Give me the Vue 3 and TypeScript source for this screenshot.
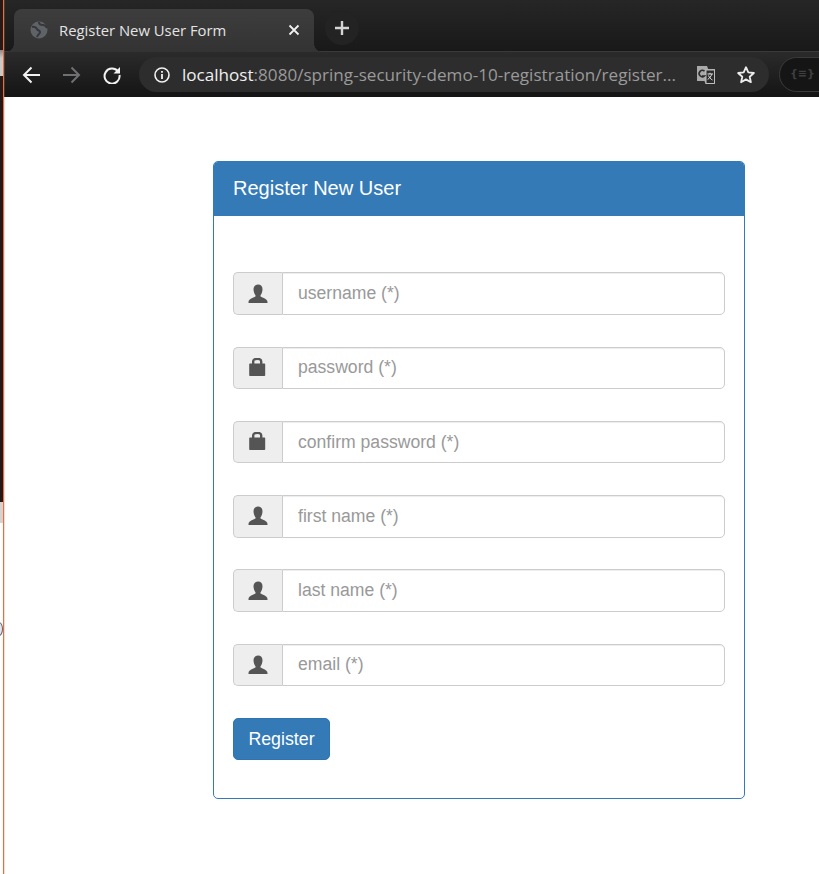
<template>
  <div class="screen">
    <div class="edge">
      <div class="edge-top"></div>
      <div class="edge-mark"></div>
    </div>
    <div class="window">
      <header class="browser">
        <div class="tabstrip">
          <div class="tab">
            <svg class="globe" viewBox="0 0 18 18">
              <circle cx="9" cy="9" r="8.5" fill="#5f6368" />
              <path d="M2 6c3-1 4 0 5 2s3 1 3 3-2 2-3 5M9 1c0 2 2 3 4 3s3 1 4 3" fill="none" stroke="#35373a" stroke-width="2" />
            </svg>
            <span class="tab-title">Register New User Form</span>
            <svg class="tab-close" viewBox="0 0 12 12">
              <path d="M1.5 1.5l9 9M10.5 1.5l-9 9" stroke="#f1f1f1" stroke-width="1.8" />
            </svg>
          </div>
          <div class="new-tab">
            <svg viewBox="0 0 16 16" width="16" height="16">
              <path d="M8 1v14M1 8h14" stroke="#d5d5d5" stroke-width="2.4" />
            </svg>
          </div>
        </div>
        <div class="toolbar">
          <svg class="nav" viewBox="0 0 18 18">
            <path d="M18 9H2M9.500 1.500L2 9l7.500 7.500" fill="none" stroke="#f2f2f2" stroke-width="2" />
          </svg>
          <svg class="nav" viewBox="0 0 18 18">
            <path d="M0 9h16M8.500 1.500L16 9l-7.500 7.500" fill="none" stroke="#6f7073" stroke-width="2" />
          </svg>
          <svg class="nav" viewBox="0 0 18 18">
            <path d="M15 5.500A7.500 7.500 0 1 0 16.500 9" fill="none" stroke="#f2f2f2" stroke-width="2" />
            <path d="M17 1v6.500h-6.500z" fill="#f2f2f2" />
          </svg>
          <div class="omnibox">
            <svg class="info" viewBox="0 0 16 16">
              <circle cx="8" cy="8" r="7" fill="none" stroke="#f1f1f1" stroke-width="1.600" />
              <path d="M8 7v5M8 4v1.800" stroke="#f1f1f1" stroke-width="1.800" />
            </svg>
            <div class="url"><span class="host">localhost</span>:8080/spring-security-demo-10-registration/register...</div>
            <svg class="translate" viewBox="0 0 20 20">
              <path d="M1 1h10l1.200 3H19v15H9.500l-1-3H1z" fill="#a9a9a9" />
              <path d="M10 5h8.500v13.500H10z" fill="#2c2c2c" stroke="#bdbdbd" stroke-width="1" />
              <path d="M8.500 6.200A3.200 3.200 0 1 0 8.500 11H5.800" fill="none" stroke="#2c2c2c" stroke-width="1.600" />
              <path d="M11.500 9h5.500M14 7.800v1.400M15.700 9.200c-.5 2-2 4-4 5.200M12.500 10.500c.8 2 2 3.500 4 4.500" fill="none" stroke="#dedede" stroke-width="1" />
            </svg>
            <svg class="star" viewBox="0 0 20 20">
              <path d="M10 2.200l2.300 5.200 5.600.6-4.200 3.700 1.200 5.500L10 14.400l-4.900 2.800 1.200-5.500L2.100 8l5.600-.6z" fill="none" stroke="#ececec" stroke-width="1.800" stroke-linejoin="round" />
            </svg>
          </div>
          <div class="profile">{≡}</div>
        </div>
      </header>

      <main class="page">
        <section class="panel">
          <h3 class="panel-head">Register New User</h3>
          <form class="panel-body" @submit.prevent>
            <div v-for="field in fields" :key="field.placeholder" class="field">
              <span class="addon">
                <svg v-if="field.icon === 'user'" viewBox="0 0 20 20" width="20" height="20">
                  <path d="M10 .5c2.900 0 4.500 2 4.500 4.800 0 2.400-1 4.900-2 5.900v1.400c1 1 6.800 1.800 7 5.500v.9H.5v-.9c.2-3.700 6-4.500 7-5.500v-1.400c-1-1-2-3.500-2-5.900C5.500 2.500 7.100.5 10 .5z" fill="#555" />
                </svg>
                <svg v-else viewBox="0 0 20 20" width="20" height="20">
                  <path d="M2.200 5.500h14c.6 0 1 .4 1 1V17c0 .6-.4 1-1 1h-14c-.6 0-1-.4-1-1V6.500c0-.6.4-1 1-1z" fill="#555" />
                  <path d="M5.200 6V3.200C5.200 1.600 6.800.9 9.200.9s4 .7 4 2.300V6" fill="none" stroke="#555" stroke-width="2.400" />
                </svg>
              </span>
              <input class="control" type="text" :placeholder="field.placeholder" />
            </div>
            <button class="submit" type="submit">Register</button>
          </form>
        </section>
      </main>
    </div>
  </div>
</template>

<script setup lang="ts">
interface Field {
  placeholder: string
  icon: 'user' | 'lock'
}

const fields: Field[] = [
  { placeholder: 'username (*)', icon: 'user' },
  { placeholder: 'password (*)', icon: 'lock' },
  { placeholder: 'confirm password (*)', icon: 'lock' },
  { placeholder: 'first name (*)', icon: 'user' },
  { placeholder: 'last name (*)', icon: 'user' },
  { placeholder: 'email (*)', icon: 'user' },
]
</script>

<style scoped>
.screen {
  display: flex;
  width: 819px;
  height: 874px;
  overflow: hidden;
  font-family: "Liberation Sans", Arial, sans-serif;
  background: #fff;
}

.edge {
  position: relative;
  width: 4px;
  flex: none;
  background: #fff;
  border-right: 1px solid #e8703a;
  box-shadow: 1px 0 0 rgba(232, 112, 58, 0.25);
  box-sizing: border-box;
}

.edge-top {
  height: 523px;
  background: linear-gradient(
    #241a18 0,
    #241a18 50px,
    #8a8a8a 50px,
    #c9c9c9 58px,
    #c9c9c9 76px,
    #241a18 76px,
    #241a18 502px,
    #d6d2d2 502px,
    #d6d2d2 523px
  );
}

.edge-mark {
  position: absolute;
  left: -5px;
  top: 622px;
  width: 8px;
  height: 14px;
  box-sizing: border-box;
  border: 1px solid #59607a;
  border-radius: 50%;
  background: #e4e6ee;
}

.window {
  flex: 1;
  min-width: 0;
}

.browser {
  height: 97px;
  background: #131313;
}

.tabstrip {
  display: flex;
  align-items: center;
  gap: 11px;
  height: 52px;
  box-sizing: border-box;
  padding-top: 9px;
  border-bottom: 1px solid #3a3a3a;
  background: linear-gradient(#262626, #191919);
}

.tab {
  position: relative;
  display: flex;
  align-items: center;
  width: 300px;
  height: 43px;
  margin: 0 0 -1px 10px;
  box-sizing: border-box;
  padding: 0 14px 2px 16px;
  border-radius: 8px 8px 0 0;
  background: linear-gradient(#3d3d3d, #333);
}

.tab::before,
.tab::after {
  content: "";
  position: absolute;
  bottom: 0;
  width: 8px;
  height: 8px;
}

.tab::before {
  left: -8px;
  background: radial-gradient(circle at 0 0, transparent 7.500px, #333 8px);
}

.tab::after {
  right: -8px;
  background: radial-gradient(circle at 100% 0, transparent 7.500px, #333 8px);
}

.globe {
  width: 18px;
  height: 18px;
  flex: none;
}

.tab-title {
  flex: 1;
  margin-left: 11px;
  color: #e4e4e4;
  font-family: "Open Sans", "Noto Sans", sans-serif;
  font-size: 14.850px;
  white-space: nowrap;
}

.tab-close {
  width: 12px;
  height: 12px;
  flex: none;
}

.new-tab {
  display: flex;
  align-items: center;
  justify-content: center;
  width: 34px;
  height: 34px;
  margin-bottom: 5px;
  border-radius: 50%;
  background: #232323;
}

.toolbar {
  display: flex;
  align-items: center;
  height: 45px;
  padding-left: 18px;
  overflow: hidden;
  background: linear-gradient(#2b2b2b, #141414);
}

.nav {
  width: 18px;
  height: 18px;
  flex: none;
  margin-right: 22.500px;
}

.omnibox {
  display: flex;
  align-items: center;
  width: 630px;
  height: 35px;
  flex: none;
  margin-left: -4.500px;
  box-sizing: border-box;
  padding: 0 13px 0 15px;
  border-radius: 18px;
  background: #2d2d2d;
}

.info {
  width: 16px;
  height: 16px;
  flex: none;
}

.url {
  flex: 1;
  min-width: 0;
  margin-left: 12px;
  color: #9a9a9a;
  font-family: "Open Sans", "Noto Sans", sans-serif;
  font-size: 17.100px;
  white-space: nowrap;
  overflow: hidden;
}

.host {
  color: #f0f0f0;
}

.translate {
  width: 20px;
  height: 20px;
  flex: none;
  margin-right: 20px;
}

.star {
  width: 20px;
  height: 20px;
  flex: none;
}

.profile {
  width: 60px;
  height: 35px;
  flex: none;
  margin-left: 10px;
  box-sizing: border-box;
  padding: 9px 0 0 10px;
  border: 1px solid #3a3a3a;
  border-radius: 18px;
  background: #151515;
  color: #3f3f3f;
  font-family: "DejaVu Sans", sans-serif;
  font-size: 11px;
  font-weight: 700;
}

.page {
  padding: 64px 0 0 209px;
}

.panel {
  width: 532px;
  height: 638px;
  box-sizing: border-box;
  border: 1px solid #337ab7;
  border-radius: 5px;
  overflow: hidden;
}

.panel-head {
  height: 54px;
  margin: 0;
  box-sizing: border-box;
  padding: 13px 19px 0;
  background: #337ab7;
  color: #fff;
  font-size: 20.050px;
  font-weight: 400;
  line-height: 26px;
}

.panel-body {
  display: flex;
  flex-direction: column;
  padding: 56.400px 19px 0;
}

.field {
  display: flex;
  height: 42.500px;
  margin-bottom: 31.750px;
}

.addon {
  display: flex;
  align-items: center;
  justify-content: center;
  width: 49px;
  flex: none;
  box-sizing: border-box;
  border: 1px solid #ccc;
  border-right: 0;
  border-radius: 5px 0 0 5px;
  background: #eee;
}

.control {
  flex: 1;
  min-width: 0;
  box-sizing: border-box;
  padding: 0 15px;
  border: 1px solid #ccc;
  border-radius: 0 5px 5px 0;
  box-shadow: inset 0 1px 1px rgba(0, 0, 0, 0.075);
  color: #555;
  font-family: inherit;
  font-size: 17.600px;
  outline: none;
}

.control::placeholder {
  color: #999;
  opacity: 1;
}

.submit {
  align-self: flex-start;
  width: 97px;
  height: 42px;
  box-sizing: border-box;
  padding: 2px 0 0;
  border: 1px solid #2f74ae;
  border-radius: 5px;
  background: #337ab7;
  color: #fff;
  font-family: inherit;
  font-size: 17.800px;
}
</style>
